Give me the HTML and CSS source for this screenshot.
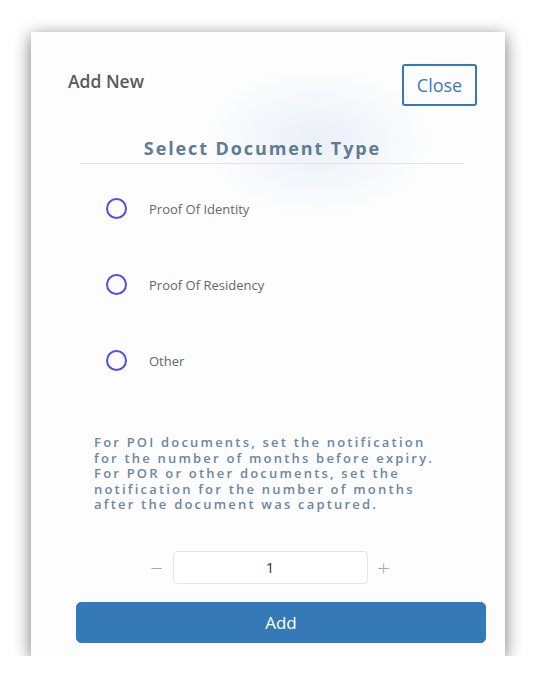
FILE: index.html
```html
<!DOCTYPE html>
<html lang="en">
<head>
    <meta charset="UTF-8">
    <meta name="viewport" content="width=device-width, initial-scale=1.0">
    <title>Add New</title>
    <link rel="stylesheet" href="styles.css">
</head>
<body>
    <div class="modal">
        <div class="modal-header">
            <span class="modal-title">Add New</span>
            <button class="btn-close">Close</button>
        </div>
        <div class="section-title">Select Document Type</div>
        <div class="options">
            <label class="option"><span class="radio"></span>Proof Of Identity</label>
            <label class="option"><span class="radio"></span>Proof Of Residency</label>
            <label class="option"><span class="radio"></span>Other</label>
        </div>
        <p class="note">For POI documents, set the notification for the number of months before expiry. For POR or other documents, set the notification for the number of months after the document was captured.</p>
        <div class="stepper">
            <span class="step">&minus;</span>
            <input type="text" class="step-input" value="1">
            <span class="step">+</span>
        </div>
        <button class="btn-add">Add</button>
    </div>
</body>
</html>
```

FILE: styles.css
```css
body {
    font-family: "Open Sans", Arial, sans-serif;
    margin: 0;
    padding: 32px 0 0 31px;
    background-color: #ffffff;
}
.modal {
    width: 474px;
    height: 624px;
    box-sizing: border-box;
    padding-top: 32px;
    background-color: #fdfdfd;
    background-image: radial-gradient(ellipse 115px 75px at 286px 110px, rgba(222, 231, 245, 0.6), rgba(222, 231, 245, 0));
    box-shadow: 0 4px 16px rgba(0, 0, 0, 0.55);
    display: flex;
    flex-direction: column;
}
.modal-header {
    display: flex;
    justify-content: space-between;
    align-items: center;
    padding: 0 28px 0 37px;
}
.modal-title {
    font-size: 17.5px;
    font-weight: 600;
    color: #5a5a5a;
    margin-top: -8px;
}
.btn-close {
    font-family: inherit;
    width: 75px;
    height: 42px;
    font-size: 18px;
    color: #3a7bbf;
    background: transparent;
    border: 2px solid #3579bd;
    border-radius: 3px;
}
.section-title {
    margin: 30px 41px 0 49px;
    padding: 0 19px 3px 0;
    border-bottom: 1px solid #dfe4ea;
    text-align: center;
    font-size: 18px;
    font-weight: 700;
    letter-spacing: 1.9px;
    color: #5f7c94;
}
.options {
    display: flex;
    flex-direction: column;
    gap: 55px;
    margin: 34px 0 0 75px;
}
.option {
    display: flex;
    align-items: center;
    gap: 22px;
    font-size: 13px;
    color: #676767;
}
.radio {
    width: 17px;
    height: 17px;
    border: 2px solid #4f4ee6;
    border-radius: 50%;
}
.note {
    margin: 64px 56px 0 63px;
    font-size: 13px;
    line-height: 15.5px;
    font-weight: 600;
    letter-spacing: 2.2px;
    color: #6b87a1;
}
.stepper {
    display: flex;
    justify-content: center;
    align-items: center;
    gap: 9px;
    margin: 38px 0 0 4px;
}
.step {
    font-size: 22px;
    font-weight: 300;
    color: #9aabbb;
    width: 14px;
    text-align: center;
}
.step-input {
    font-family: inherit;
    width: 195px;
    height: 33px;
    box-sizing: border-box;
    border: 1px solid #e2e6ea;
    border-radius: 4px;
    text-align: center;
    font-size: 15px;
    color: #333;
}
.btn-add {
    font-family: inherit;
    margin: 18px 19px 0 45px;
    height: 41px;
    font-size: 17px;
    color: #fff;
    background-color: #3579b7;
    border: 1px solid #2a7ae0;
    border-radius: 5px;
}
```
